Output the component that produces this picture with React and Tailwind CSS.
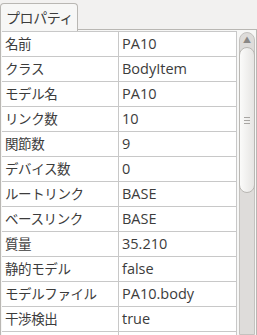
import React from 'react';

const rows = [
  ['名前', 'PA10'],
  ['クラス', 'BodyItem'],
  ['モデル名', 'PA10'],
  ['リンク数', '10'],
  ['関節数', '9'],
  ['デバイス数', '0'],
  ['ルートリンク', 'BASE'],
  ['ベースリンク', 'BASE'],
  ['質量', '35.210'],
  ['静的モデル', 'false'],
  ['モデルファイル', 'PA10.body'],
  ['干渉検出', 'true'],
  ['', ''],
];

const App = () => {
  return (
    <div
      className='w-[257px] h-[335px] overflow-hidden bg-[#f2f1f0] text-[#3c3c3c] flex flex-col font-[Open_Sans,Noto_Sans_CJK_JP,sans-serif]'
    >
      {/* タブ */}
      <div className="flex items-end h-[30px] pt-[2px]">
        <div className="w-[78px] h-[28px] bg-[#f7f7f6] border border-b-0 border-[#b9b7b3] rounded-t-[4px] flex items-center pl-[5px] text-[14px] tracking-[-0.4px] relative z-10 mb-[-1px]">
          プロパティ
        </div>
        <div className="flex-1 border-b border-[#b9b7b3]"></div>
      </div>

      {/* パネル */}
      <div className="flex-1 flex bg-[#f7f7f6] border-l border-r border-[#b9b7b3] pl-[1px] pt-[1px] min-h-0">
        <div className="w-[235px] bg-white border-r border-[#c8c8c8] overflow-hidden">
          {rows.map(([k, v], i) => (
            <div key={i} className="flex h-[25px] border-t border-[#c8c8c8]">
              <div className="w-[117px] border-r border-[#c8c8c8] pl-[3px] flex items-center text-[13.5px] tracking-[-0.4px]">{k}</div>
              <div className="flex-1 pl-[3px] flex items-center text-[14.5px]">{v}</div>
            </div>
          ))}
        </div>

        {/* スクロールバー */}
        <div className="w-[19px] flex justify-center pl-[1px] pt-[1px]">
          <div className="w-[16px] h-full bg-[#dedcda] border border-[#c4c2bf] rounded-t-[8px] flex flex-col relative">
            <div className="h-[14px] flex justify-center items-center text-[#8a8886] text-[8px] leading-none">▲</div>
            <div className="mx-[-1px] h-[146px] rounded-[8px] border border-[#b9b7b3] bg-gradient-to-r from-[#fbfbfa] to-[#e6e5e3] flex flex-col items-center justify-center gap-[2px]">
              <div className="w-[6px] h-[1px] bg-[#a8a6a3]"></div>
              <div className="w-[6px] h-[1px] bg-[#a8a6a3]"></div>
              <div className="w-[6px] h-[1px] bg-[#a8a6a3]"></div>
            </div>
          </div>
        </div>
      </div>
    </div>
  );
};

export default App;
